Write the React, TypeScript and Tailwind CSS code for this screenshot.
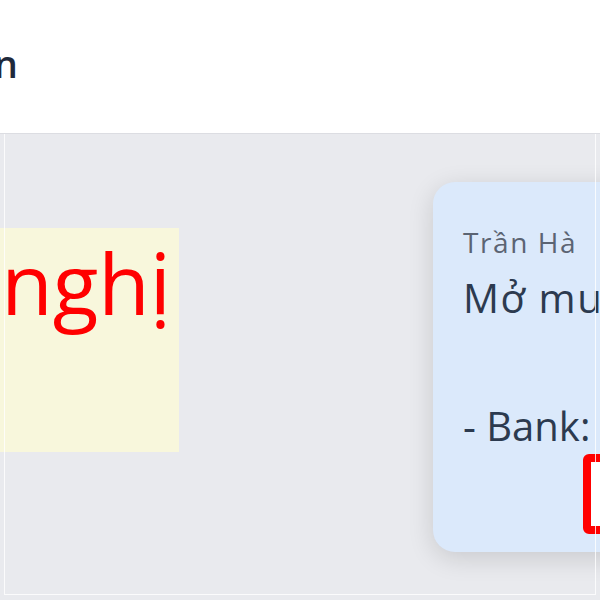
import React from 'react';

const FONT = "font-['Open_Sans','Noto_Sans',sans-serif]";

export default function App() {
  return (
    <div className={`relative w-[600px] h-[600px] overflow-hidden bg-white flex flex-col ${FONT}`}>
      {/* Header */}
      <div className="h-[133px] shrink-0 flex items-start">
        <div className="w-[18px] flex justify-end pt-[37px]">
          <h1 className="whitespace-nowrap text-[38px] leading-[52px] font-semibold text-[#1e293b]">
            Tin nhắn
          </h1>
        </div>
      </div>

      {/* Body */}
      <div className="flex-1 flex items-start bg-[#e9eaee] border-t border-[#dcdde2]">
        {/* Highlighted note */}
        <div className="mt-[94px] w-[179px] h-[224px] shrink-0 overflow-hidden bg-[#f8f7dc] flex justify-end items-start pr-[8px] pt-[13px]">
          <span className="whitespace-nowrap text-[84px] leading-none text-[#ff0000]">Đề nghị</span>
        </div>

        {/* Message bubble */}
        <div className="ml-[254px] mt-[48px] w-[280px] shrink-0 rounded-[22px] bg-[#dbe9fb] shadow-[0_6px_26px_rgba(0,0,0,0.14)] pl-[30px] pt-[42px] pb-[18px]">
          <div className="text-[28px] leading-[36px] tracking-[1.6px] text-[#5b6473] whitespace-nowrap">Trần Hà</div>
          <div className="mt-[6px] text-[40px] leading-[64px] text-[#2c3a4f] whitespace-nowrap">
            <div className="tracking-[1.6px]">Mở mua hàng</div>
            <div>&nbsp;</div>
            <div>- Bank: Vietcombank</div>
          </div>
          <div className="-mt-[4px] pl-[120px]">
            <div className="w-[120px] h-[80px] rounded-[6px] border-[8px] border-[#ff0000] bg-white" />
          </div>
        </div>
      </div>

      {/* Inset frame line over the body */}
      <div className="pointer-events-none absolute left-[4px] right-[4px] top-[134px] bottom-[5px] border-l border-r border-b border-white/80" />
    </div>
  );
}
